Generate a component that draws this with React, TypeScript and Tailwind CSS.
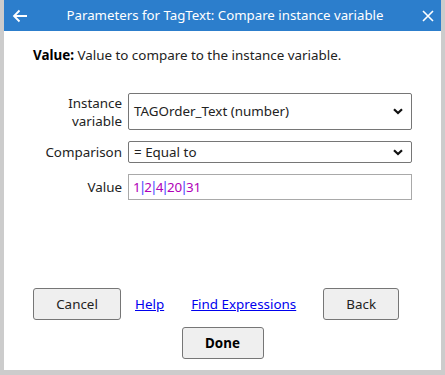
import React from "react";

const Chevron = () => (
  <svg width="10" height="7" viewBox="0 0 10 7" className="shrink-0">
    <path d="M1 1.2 L5 5 L9 1.2" fill="none" stroke="#111" strokeWidth="2.2" />
  </svg>
);

const Pipe = () => (
  <span className="text-[#5a5aff] text-[14px]" style={{ fontFamily: '"Liberation Sans", Arial, sans-serif' }}>|</span>
);

export default function App() {
  const font = { fontFamily: '"Segoe UI", "Noto Sans", sans-serif' };
  return (
    <div className="w-[445px] h-[375px] bg-[#cccccc] pl-[4px] pr-[4px] pb-[5px] flex flex-col" style={font}>
      <div className="h-[31px] bg-[#2c7ecc] flex items-center text-white shrink-0">
        <svg width="16" height="14" viewBox="0 0 16 14" className="ml-[8px]">
          <path d="M15 7 H2 M7.5 1.5 L2 7 L7.5 12.5" fill="none" stroke="white" strokeWidth="1.8" />
        </svg>
        <div className="flex-1 text-center text-[13.25px] leading-none">Parameters for TagText: Compare instance variable</div>
        <svg width="12" height="12" viewBox="0 0 12 12" className="mr-[7px]">
          <path d="M1 1 L11 11 M11 1 L1 11" fill="none" stroke="white" strokeWidth="1.6" />
        </svg>
      </div>
      <div className="flex-1 bg-white flex flex-col">
        <div className="pl-[29px] pt-[14px] text-[13.4px] leading-[20px] text-[#222]">
          <b className="text-black">Value:</b> Value to compare to the instance variable.
        </div>
        <div className="mt-[28px] flex flex-col gap-[11px] text-[13.4px] text-[#222]">
          <div className="flex items-center h-[37px]">
            <div className="w-[118px] text-right leading-[18px]">Instance<br />variable</div>
            <div className="ml-[6px] w-[284px] h-[37px] border border-[#767676] rounded-[2px] flex items-center justify-between pl-[5px] pr-[8px]">
              <span>TAGOrder_Text (number)</span>
              <Chevron />
            </div>
          </div>
          <div className="flex items-center h-[22px]">
            <div className="w-[118px] text-right">Comparison</div>
            <div className="ml-[6px] w-[284px] h-[22px] border border-[#767676] rounded-[2px] flex items-center justify-between pl-[5px] pr-[8px]">
              <span>= Equal to</span>
              <Chevron />
            </div>
          </div>
          <div className="flex items-center h-[26px]">
            <div className="w-[118px] text-right">Value</div>
            <div className="ml-[6px] w-[284px] h-[26px] border border-[#a9a9a9] flex items-center pl-[4px]">
              <span className="text-[#b000b8]">1</span>
              <Pipe />
              <span className="text-[#b000b8]">2</span>
              <Pipe />
              <span className="text-[#b000b8]">4</span>
              <Pipe />
              <span className="text-[#b000b8]">20</span>
              <Pipe />
              <span className="text-[#b000b8]">31</span>
            </div>
          </div>
        </div>
        <div className="mt-[88px] flex items-center text-[13.4px] text-[#222] h-[32px]">
          <button className="ml-[29px] w-[88px] h-[32px] bg-[#efefef] border border-[#767676] rounded-[3px]">Cancel</button>
          <a className="ml-[14px] text-[#0000ee] underline">Help</a>
          <a className="ml-[27px] text-[#0000ee] underline">Find Expressions</a>
          <button className="ml-[27px] w-[76px] h-[32px] bg-[#efefef] border border-[#767676] rounded-[3px]">Back</button>
        </div>
        <div className="mt-[7px] flex justify-center">
          <button className="w-[82px] h-[32px] bg-[#efefef] border border-[#767676] rounded-[3px] text-[13.4px] font-bold text-black">Done</button>
        </div>
      </div>
    </div>
  );
}
